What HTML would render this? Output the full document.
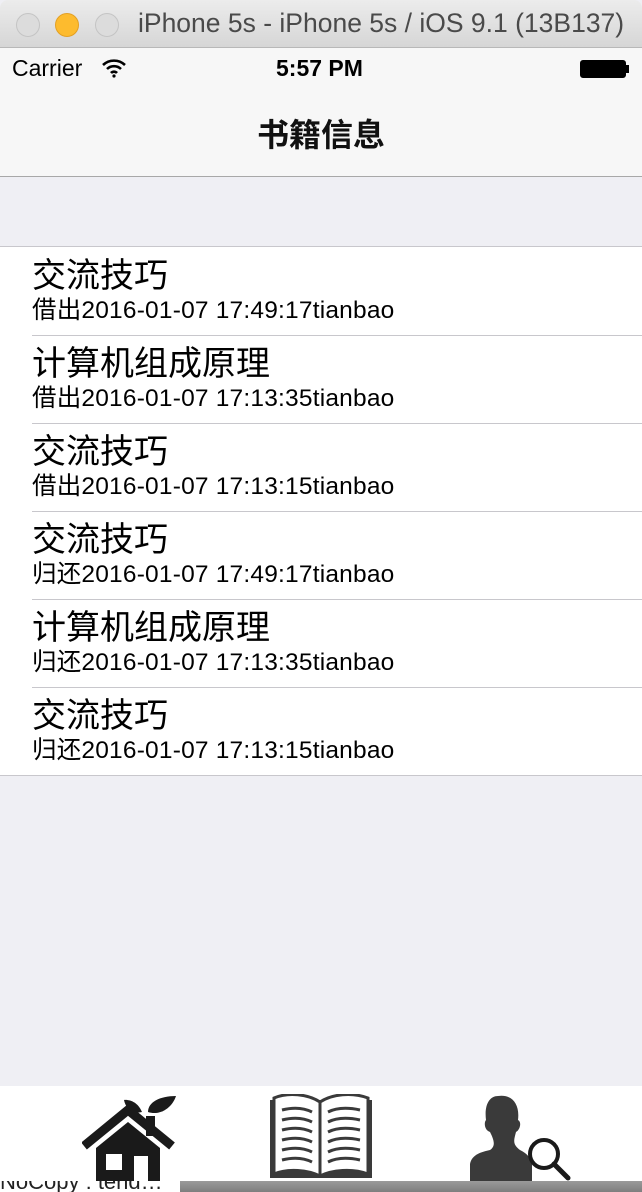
<!DOCTYPE html>
<html><head><meta charset="utf-8"><style>
*{margin:0;padding:0;box-sizing:border-box}
body{width:642px;height:1192px;overflow:hidden;background:#efeff4;font-family:"Liberation Sans","Noto Sans CJK SC",sans-serif;position:relative}
.tb{position:absolute;left:0;top:0;width:642px;height:48px;background:linear-gradient(#ececec,#d6d6d6);border-bottom:1px solid #b8b8b8;border-radius:8px 8px 0 0}
.dot{position:absolute;top:13px;width:24px;height:24px;border-radius:50%;background:#dcdcdc;border:1px solid #c4c4c4}
.tt{position:absolute;left:138px;top:8px;font-size:26.5px;color:#4a4a4a;white-space:nowrap}
.nav{position:absolute;top:48px;left:0;width:642px;height:129px;background:#f7f7f7;border-bottom:1px solid #a8a8a8}
.sb{position:absolute;top:7px;font-size:23px;color:#000}
.title{position:absolute;top:62px;width:642px;text-align:center;font-size:32px;font-weight:bold;color:#111}
.list{position:absolute;top:246px;left:0;width:642px;background:#fff;border-top:1px solid #c8c7cc;border-bottom:1px solid #c8c7cc}
.row{height:88px;position:relative}
.row+.row:before{content:"";position:absolute;left:32px;right:0;top:0;border-top:1px solid #c8c7cc}
.t1{position:absolute;left:32px;top:10px;font-size:34px;color:#000;line-height:38px;white-space:nowrap}
.t2{position:absolute;left:32px;top:51px;font-size:24.5px;color:#000;line-height:26px;white-space:nowrap;letter-spacing:0.2px}
.tab{position:absolute;top:1086px;left:0;width:642px;height:95px;background:#fff}
.bot{position:absolute;top:1181px;left:0;width:642px;height:11px;background:linear-gradient(#9a9a9a,#7e7e7e);overflow:hidden}
</style></head><body>
<div class="tb">
<div class="dot" style="left:16px"></div>
<div class="dot" style="left:55px;background:#fdbb2e;border-color:#e3a024"></div>
<div class="dot" style="left:95px"></div>
<div class="tt">iPhone 5s - iPhone 5s / iOS 9.1 (13B137)</div>
</div>
<div class="nav">
<div class="sb" style="left:12px">Carrier</div>
<svg style="position:absolute;left:101px;top:10px" width="26" height="20" viewBox="0 0 26 20"><path d="M2 7a16 16 0 0 1 22 0M6 11a10 10 0 0 1 14 0M10 15a4 4 0 0 1 6 0" stroke="#000" stroke-width="2.6" fill="none"/><circle cx="13" cy="18" r="1.6"/></svg>
<div class="sb" style="left:276px;font-weight:bold">5:57 PM</div>
<div style="position:absolute;left:580px;top:12px;width:46px;height:18px;border:2px solid #000;border-radius:3px;background:#000"></div>
<div style="position:absolute;left:626px;top:17px;width:3px;height:8px;background:#000"></div>
<div class="title">书籍信息</div>
</div>
<div class="list">
<div class="row"><div class="t1">交流技巧</div><div class="t2">借出2016-01-07 17:49:17tianbao</div></div>
<div class="row"><div class="t1">计算机组成原理</div><div class="t2">借出2016-01-07 17:13:35tianbao</div></div>
<div class="row"><div class="t1">交流技巧</div><div class="t2">借出2016-01-07 17:13:15tianbao</div></div>
<div class="row"><div class="t1">交流技巧</div><div class="t2">归还2016-01-07 17:49:17tianbao</div></div>
<div class="row"><div class="t1">计算机组成原理</div><div class="t2">归还2016-01-07 17:13:35tianbao</div></div>
<div class="row"><div class="t1">交流技巧</div><div class="t2">归还2016-01-07 17:13:15tianbao</div></div>
</div>
<div class="tab">
<svg style="position:absolute;left:82px;top:8px" width="96" height="90" viewBox="0 0 96 90">
<path d="M2 52 L46 16 L90 52" stroke="#1a1a1a" stroke-width="9" fill="none"/>
<rect x="64" y="22" width="9" height="20" fill="#1a1a1a"/>
<path d="M14 54 L46 28 L78 54 V90 H14Z" fill="#1a1a1a"/>
<rect x="24" y="60" width="16" height="16" fill="#fff"/>
<rect x="52" y="62" width="14" height="28" fill="#fff"/>
<path d="M60 18 C54 4 42 6 42 6 C44 16 52 20 60 18Z" fill="#1a1a1a"/>
<path d="M66 18 C66 8 78 2 94 2 C90 14 78 22 66 18Z" fill="#1a1a1a"/>
</svg>
<svg style="position:absolute;left:268px;top:8px" width="106" height="86" viewBox="0 0 106 86">
<path d="M2 6 V84 H104 V6" fill="#3a3a3a"/>
<path d="M6 4 C20 -2 40 0 52 8 C64 0 84 -2 100 4 V80 C84 74 64 76 52 82 C40 76 20 74 6 80Z" fill="#fff" stroke="#3a3a3a" stroke-width="3"/>
<path d="M52 8 V82" stroke="#3a3a3a" stroke-width="3"/>
<g stroke="#3a3a3a" stroke-width="3" fill="none">
<path d="M14 16 C26 13 36 14 44 18M14 26 C26 23 36 24 44 28M14 36 C26 33 36 34 44 38M14 46 C26 43 36 44 44 48M14 56 C26 53 36 54 44 58M14 66 C26 63 36 64 44 68"/>
<path d="M60 18 C68 14 78 13 92 16M60 28 C68 24 78 23 92 26M60 38 C68 34 78 33 92 36M60 48 C68 44 78 43 92 46M60 58 C68 54 78 53 92 56M60 68 C68 64 78 63 92 66"/>
</g>
</svg>
<svg style="position:absolute;left:468px;top:6px" width="106" height="90" viewBox="0 0 106 90">
<path d="M30 4 C44 2 52 12 50 28 C54 30 52 38 48 40 C46 48 44 52 52 58 C60 62 62 66 64 70 L64 90 H2 V72 C4 62 14 60 22 58 C28 54 26 48 22 40 C16 38 16 30 18 28 C16 12 22 4 30 4Z" fill="#3a3a3a"/>
<circle cx="76" cy="62" r="14" fill="#fff" stroke="#1a1a1a" stroke-width="4"/>
<path d="M86 72 L100 86" stroke="#1a1a1a" stroke-width="5" stroke-linecap="round"/>
</svg>
</div>
<div class="bot"><div style="position:absolute;left:0;top:0;width:180px;height:11px;background:#fff;font-size:22px;line-height:22px;color:#222;overflow:hidden;white-space:nowrap"><span style="position:relative;top:-10px">NoCopy : tend…</span></div></div>
</body></html>
